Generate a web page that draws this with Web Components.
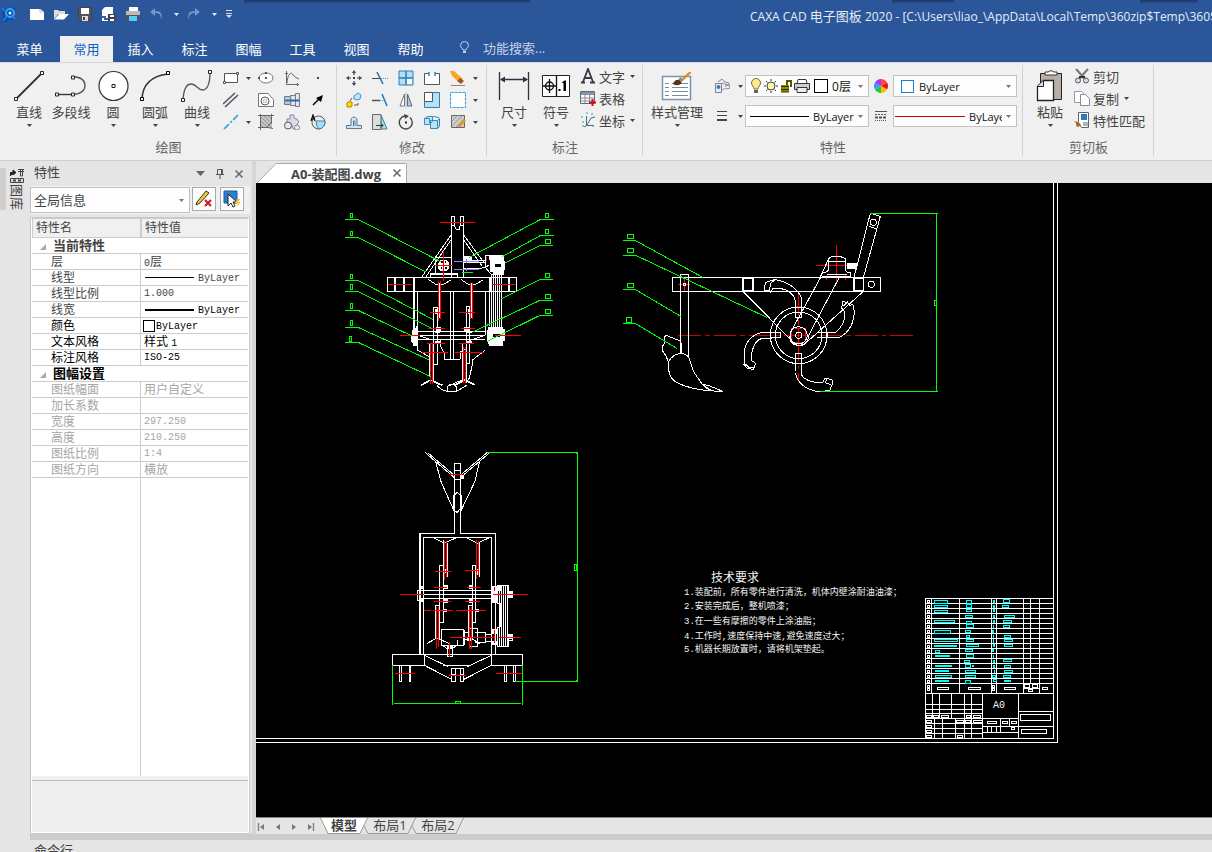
<!DOCTYPE html>
<html lang="zh-CN">
<head>
<meta charset="utf-8">
<title>CAXA CAD 电子图板 2020</title>
<style>
html,body{margin:0;height:100%}
body{font-family:"Open Sans","Noto Sans CJK SC",sans-serif;font-size:13px;color:#444;background:#e5e5e5;overflow:hidden}
cad-app{height:100vh}
</style>
</head>
<body>
<cad-app></cad-app>
<script>
const ICONS = {
logo:[16,16,'<path d="M1 2l5 1 5-2 4 2-2 3 1 5-3 1 2 3-5-2-3 3-4 1 1-5z" fill="#0a4bb0"/><circle cx="9" cy="7" r="4" fill="none" stroke="#3aa4f0" stroke-width="2"/><path d="M1 2l4 4M6 10l-4 5M12 10l2 3" stroke="#1a7ae8" stroke-width="2"/><circle cx="9" cy="7" r="1.500" fill="#dff"/>'],
file:[16,16,'<path d="M1 3h10l4 3v8H1z" fill="#fff"/><path d="M11 3v3h4" fill="none" stroke="#b8c4d8"/>'],
open:[16,16,'<path d="M1 13V4h4l1 1h6v3H5z" fill="#ddd"/><path d="M1 13.500L6 8h10l-5 5.500z" fill="#fff"/>'],
save:[16,16,'<path d="M1.500 1.500h13v13H3l-1.500-2z" fill="#555" stroke="#444"/><path d="M4 2h8v6H4z" fill="#fff"/><path d="M5 10h6v5H5z" fill="#ddd"/><path d="M6 11h2v3H6z" fill="#444"/>'],
saveas:[16,16,'<path d="M4 1h8v14H1V4z" fill="#fff"/><path d="M1 11h3v2h3" stroke="#36a" fill="none" stroke-width="2"/><path d="M7 8h8v7H7z" fill="#444"/><path d="M9 9h4v2H9zM9 13h4v2H9z" fill="#fff"/>'],
print:[16,16,'<path d="M4 1h9v4H4z" fill="#fff"/><path d="M1 5h14v7H1z" fill="#bbb"/><path d="M1 9h14v4H1z" fill="#555"/><path d="M4 10h8v5H4z" fill="#5cf"/>'],
undo:[14,14,'<path d="M6 1L1 5l5 4V6c5 0 6 2 6 7 2-6 0-9-6-9z" fill="#7795c6"/>'],
redo:[14,14,'<path d="M8 1l5 4-5 4V6c-5 0-6 2-6 7-2-6 0-9 6-9z" fill="#7795c6"/>'],
more:[8,10,'<path d="M1 1.500h6M1 4.500h6" stroke="#ddd"/><path d="M1 6h6L4 9z" fill="#ddd"/>'],
bulb:[12,14,'<path d="M4 9C4 7 1.500 7 1.500 4.500a4 4 0 0 1 8 0C9.500 7 7 7 7 9z" fill="none" stroke="#c6d2e6"/><path d="M4 10h3v2H4z" fill="#c6d2e6"/>'],
line:[32,32,'<path d="M3 29L29 3" stroke="#333" stroke-width="1.800"/><path d="M1.500 27.500h3v3h-3zM27.500 1.500h3v3h-3z" fill="#fff" stroke="#222"/>'],
pline:[32,32,'<path d="M2 24.500h16q12-1 12-9t-12-9" fill="none" stroke="#555" stroke-width="1.300"/><path d="M2 24.500h16" stroke="#2b3a4a"/><path d="M.5 23h3v3h-3zM16.500 23h3v3h-3zM16.500 6h3v3h-3z" fill="#fff" stroke="#222"/>'],
circle:[32,32,'<circle cx="16.500" cy="16" r="14.500" fill="#fff" stroke="#333" stroke-width="1.200"/><path d="M15 14.500h3v3h-3z" fill="#fff" stroke="#222"/>'],
arc:[32,32,'<path d="M3 29Q4 7 29 4" fill="none" stroke="#333" stroke-width="1.500"/><path d="M1.500 27.500h3v3h-3zM27.500 1.500h3v3h-3z" fill="#fff" stroke="#000"/>'],
curve:[32,32,'<path d="M2 30q1-16 8-16c6 0 6 6 12 6q7-1 7-18" fill="none" stroke="#555" stroke-width="1.300"/><path d="M.5 28.500h3v3h-3zM27.500.5h3v3h-3z" fill="#fff" stroke="#222"/>'],
rect:[16,16,'<path d="M1.500 3.500h13v9h-13z" fill="#fff" stroke="#555"/><path d="M.5 11.500h2v2h-2zM13.500 2.500h2v2h-2z" fill="#fff" stroke="#555"/>'],
ellipse:[16,16,'<ellipse cx="8" cy="8" rx="7" ry="5" fill="#fff" stroke="#777"/><path d="M7 2h2v2H7zM7 7h2v2H7zM0 7h2v2H0z" fill="#555"/>'],
func:[16,16,'<path d="M2.500 1v13.500H15M1 3.500h3M13.500 13v3M3 13C4 2 8 2 9 5q3 3 6 4" fill="none" stroke="#666"/>'],
point:[16,16,'<path d="M7 7h2v2H7z" fill="#444"/>'],
parallel:[16,16,'<path d="M0 12L12 1M2 15L15 3" stroke="#556" stroke-width="1.600"/>'],
hole:[16,16,'<path d="M.5 14.500v-13H10l5.500 6v7z" fill="#fff" stroke="#777"/><circle cx="7" cy="9" r="4" fill="#fff" stroke="#556"/><path d="M5.500 7.500h3v3h-3z" fill="#eee" stroke="#999" stroke-width=".5"/>'],
shaft:[16,16,'<path d="M.5 4.500h6v8h-6zM6.500 3.500h5v10h-5zM11.500 1.500h4v13h-4z" fill="#dfe7f0" stroke="#778"/><path d="M1 8.500h14" stroke="#369" stroke-width="2"/><path d="M1 6h7M1 11h7" stroke="#8ab"/>'],
arrow:[16,16,'<path d="M3 13L9 7" stroke="#000" stroke-width="1.500"/><path d="M13 3l-2 7-5-4z" fill="#000"/>'],
centre:[16,16,'<path d="M1 15L15 1" stroke="#2da3e0" stroke-width="1.700" stroke-dasharray="7 2 2 2"/>'],
hatch:[16,16,'<path d="M2 2h12v12H2z" fill="#c4c4c4"/><path d="M2 6l8 8M2 2l12 12M6 2l8 8M2 10l4 4M10 2l4 4" stroke="#999"/><path d="M2.500 0v16M0 1.500h16M13.500 0v9q-4 2-4 4.500M0 13.500h10l5 1" fill="none" stroke="#666"/>'],
gear:[16,16,'<path d="M6 1h4v3l3 1 2 3-2 2v5h-4l-1-4-3-2H3V5h3z" fill="#d7dce8" stroke="#889"/><circle cx="4" cy="11.500" r="3.500" fill="#e8e8ee" stroke="#556"/><circle cx="13" cy="13.500" r="2.500" fill="#eee" stroke="#889"/>'],
text3d:[16,16,'<circle cx="8.500" cy="8.500" r="6.500" fill="#eee" stroke="#555"/><path d="M6 7h9q0 7-6 8-3-2-3-8z" fill="#a8dcf8" stroke="#38a"/><path d="M1 7l2-6 2 6M1.500 5h3" fill="none" stroke="#000" stroke-width="1.200"/>'],
move:[16,16,'<path d="M8 1v4M8 11v4M1 8h4M11 8h4M6.500 3L8 1l1.500 2M6.500 13L8 15l1.500-2M3 6.500L1 8l2 1.500M13 6.500L15 8l-2 1.500" fill="none" stroke="#445" stroke-width="1.200"/><path d="M7 7h2v2H7z" fill="#333"/>'],
trim:[16,16,'<path d="M0 8.500h9" stroke="#444"/><path d="M9 8.500h7" stroke="#3ac" stroke-dasharray="1 1"/><path d="M5 2l6 12" stroke="#2574b8" stroke-width="1.600"/>'],
array:[16,16,'<path d="M1 1h14v14H1z" fill="#b4dcf4" stroke="#2a7fb5"/><path d="M1 8h14M8 1v14" stroke="#2a7fb5" stroke-width="1.500"/><path d="M9 9h5v5H9z" fill="#fff"/>'],
breakp:[16,16,'<path d="M5 3.500H.5v11h15v-11H11" fill="#fff" stroke="#555"/><path d="M5 2v4M11 2v4" stroke="#1e8ad6" stroke-width="1.500"/>'],
erase:[16,16,'<path d="M0 1h4l9 8-3 4L2 6z" fill="#f8a820"/><path d="M10 8l4 3-3 3-4-3z" fill="#a0522d"/><path d="M1 15.500h14" stroke="#888"/>'],
copy2:[16,16,'<path d="M8 4l4-3 3 2-1 4-3 1-3-1z" fill="#b8e4fc" stroke="#3a9ad0"/><path d="M1 11l1-1h4v4l-1 1H1z" fill="#fd0" stroke="#a80"/><path d="M8 13h4v-2M6 6L4 9" stroke="#a33" fill="none"/>'],
extend:[16,16,'<path d="M0 8.500h8" stroke="#555" stroke-width="1.500"/><path d="M8 8.500h4" stroke="#2a9" stroke-dasharray="1 1"/><path d="M10 2l5 12" stroke="#2574b8" stroke-width="1.500"/>'],
mirror:[16,16,'<path d="M6.500 2v12H2z" fill="#fff" stroke="#777"/><path d="M9.500 2v12H14z" fill="#9fd0ee" stroke="#667"/><path d="M8 0v16" stroke="#bbb"/>'],
scale:[16,16,'<path d="M.5.5h15v15H.5z" fill="#b4e0f8" stroke="#3a7da8"/><path d="M.5.5h8v9h-8z" fill="#fff" stroke="#555"/>'],
stretch:[16,16,'<path d="M.5.500h15v15H.5z" fill="#fff" stroke="#2a9be0" stroke-dasharray="3 1"/>'],
offset:[16,16,'<path d="M1 11.500h4V5q3-4 6 0v6.500h4.500v3H.5v-3z" fill="#c9e6f7" stroke="#678"/><path d="M7.500 12V7h1.500v5" stroke="#678" fill="#f0f0f0"/>'],
skew:[16,16,'<path d="M9 1l6 14H9z" fill="#a8dcf4" stroke="#389"/><path d="M.5.5H9v15H.5z" fill="#ddd" stroke="#667"/><path d="M4 11.500h7M9 9.500l2 2-2 2" stroke="#333" fill="none"/>'],
rotate:[16,16,'<path d="M7 2a6.500 6.500 0 1 0 5 1.500" fill="none" stroke="#444" stroke-width="1.400"/><path d="M6 0l5 2-4 3z" fill="#444"/><path d="M7 7.500h2v2H7z" fill="#222"/>'],
block:[16,16,'<path d="M.5 4.500l3-2h5v5l-3 3h-5zM6.500 6.500h7l2-2v8l-2 2h-7zM.5 4.500h5v5M13.500 6.500v8M9 2.500l6 1" fill="#b8e4fa" stroke="#3a8bb5"/>'],
hatchedit:[16,16,'<path d="M1.500 1.500h13v12h-13z" fill="#ccc" stroke="#666"/><path d="M2 7l6-6M2 12L12 2M6 13l8-8" stroke="#999"/><path d="M14 5l2 2-6 6H8v-2z" fill="#e8962a"/>'],
dim:[32,32,'<path d="M1.500 2v28M30.500 2v28M3 9.500h26" stroke="#2b3240" stroke-width="1.300"/><path d="M2 9.500l5-3v6zM30 9.500l-5-3v6z" fill="#2b3240"/>'],
symbol:[32,32,'<path d="M2.500 5.500h27v21h-27z" fill="#fff" stroke="#222"/><path d="M16.500 5v22M3 16h13M9.500 9v14" stroke="#111" stroke-width="1.300"/><circle cx="9.500" cy="16" r="4" fill="none" stroke="#111" stroke-width="1.400"/><path d="M18.500 19h2v2h-2zM21.500 13l3-2.500h1.500V21h-2.500v-8z" fill="#000"/>'],
letter:[16,16,'<path d="M1 14.500h4M10 14.500h5M3 14L8 1l5 13M5 10h6" stroke="#333a44" fill="none" stroke-width="1.800"/>'],
table:[16,16,'<path d="M.5 1.500h14v12H.5z" fill="#fff" stroke="#667"/><path d="M1 2h13v3H1z" fill="#8694a8"/><path d="M1 8h13M1 11h13M5 5v8M9.500 5v8" stroke="#889"/><path d="M12.500 9v7M9 12.500h7" stroke="#c11" stroke-width="2"/>'],
coord:[16,16,'<path d="M6.500 4v9.500H14M7 13l4-7 4-1M4 15l3-2" fill="none" stroke="#567"/><path d="M1 5h3M2 10h2M2 14h2M6 1h3M11 2h3M12 14h3" stroke="#29c" stroke-dasharray="2 1"/>'],
styles:[32,32,'<path d="M1.500 6.500h28v23h-28z" fill="#fff" stroke="#7d93a8" stroke-width="1.500"/><path d="M4 13.500h4M11 13.500h16M4 17.500h4M11 17.500h16M4 21.500h4M11 21.500h16M4 25.500h4M11 25.500h16" stroke="#7a8ca0"/><path d="M21 8l7-6q3-1 2 1l-7 7z" fill="#e08a2a"/><path d="M19 7l4 3-3 2-3-1z" fill="#888"/><path d="M12 14q2-5 6-4l3 3q-4 4-9 1z" fill="#5a3418"/>'],
layers:[16,16,'<path d="M4 4l4-3 3 3 4 1v2l-4 1M5 7l4-2 7 3v2l-4 1" fill="#eee" stroke="#889"/><path d="M1.500 5.500h6v9h-6z" fill="#e8eef5" stroke="#789"/><circle cx="4.500" cy="9" r="2" fill="#47a"/><path d="M8 12l4-2" stroke="#999"/>'],
lweight:[12,12,'<path d="M1 1.500h10M1 5.500h10" stroke="#445"/><path d="M1 10h10" stroke="#445" stroke-width="2"/>'],
lightbulb:[12,16,'<path d="M4 11C4 8 1.500 8 1.500 5a4.500 4.500 0 0 1 9 0C10.500 8 8 8 8 11z" fill="#fce98a" stroke="#765"/><path d="M4 12h4v3H4z" fill="#666"/>'],
sun:[16,16,'<circle cx="8" cy="8" r="4" fill="#fff6b0" stroke="#444"/><path d="M8 1v2M8 13v2M1 8h2M13 8h2M3 3l1.500 1.500M11.500 11.500L13 13M13 3l-1.500 1.500M4.500 11.500L3 13" stroke="#333"/>'],
unlock:[13,14,'<path d="M1 6h8v7H1z" fill="#8c8c00"/><path d="M1 7.500h8M1 10.500h8M1 13h8" stroke="#333300"/><path d="M7 6V2h4v6" fill="none" stroke="#555500" stroke-width="2"/>'],
printer:[16,16,'<path d="M4 1.500h8l1 4H3z" fill="#fff" stroke="#333"/><path d="M.5 5.500h15v6H.5z" fill="#ccd" stroke="#333"/><path d="M3 9.500h10v5H3z" fill="#eee" stroke="#333"/>'],
wheel:[14,14,'<path d="M7 7L7 0A7 7 0 0 1 13 3.500z" fill="#f44"/><path d="M7 7l6-3.500a7 7 0 0 1 0 7z" fill="#e11"/><path d="M7 7l6 3.500A7 7 0 0 1 7 14z" fill="#fb0"/><path d="M7 7v7a7 7 0 0 1-6-3.500z" fill="#2c3"/><path d="M7 7l-6 3.500a7 7 0 0 1 0-7z" fill="#39f"/><path d="M7 7L1 3.500A7 7 0 0 1 7 0z" fill="#a3e"/>'],
ltype:[12,12,'<path d="M0 1.500h12" stroke="#555"/><path d="M0 4.500h12" stroke="#555" stroke-dasharray="2 1"/><path d="M0 7.500h12" stroke="#555" stroke-width="2" stroke-dasharray="3 1"/><path d="M0 10.500h12" stroke="#555" stroke-dasharray="1 1"/>'],
paste:[28,32,'<path d="M4.500 3.500h21v26h-21z" fill="#b9afa4" stroke="#222"/><path d="M9 5V2h3q3-3 6 0h3v3z" fill="#fff" stroke="#333"/><path d="M1.500 16.500l6-6h10v20h-16z" fill="#fff" stroke="#222" stroke-width="1.300"/><path d="M1.500 16.500h6v-6" fill="#dde" stroke="#222"/>'],
cut:[16,16,'<path d="M2 1l9 10M14 1L5 11" stroke="#777" stroke-width="2"/><path d="M5 9h6" stroke="#333" stroke-width="2"/><circle cx="4" cy="12.500" r="2.500" fill="#ddd" stroke="#556"/><circle cx="12" cy="12.500" r="2.500" fill="#ddd" stroke="#556"/>'],
copy:[16,16,'<path d="M.5 1.500h7l2 2v9h-9z" fill="#fff" stroke="#99a"/><path d="M6.500 4.500h5l4 4v7h-9z" fill="#fff" stroke="#889"/>'],
match:[16,16,'<path d="M4.500.5h10v15h-7l-3-5z" fill="#fff" stroke="#567"/><path d="M7 2h6v6H7z" fill="#3978b8"/><path d="M9 11h5M9 13h5" stroke="#567"/><path d="M0 9l4 1 3 3-3 2q-2 0-2-4z" fill="#b0651e"/>'],
editx:[20,20,'<path d="M3 13L12 2l3 2-9 10-4 2z" fill="#f6c830" stroke="#333"/><path d="M11 11l6 6M17 11l-6 6" stroke="#c22" stroke-width="2.200"/>'],
pick:[20,20,'<path d="M2 2h13v12H2z" fill="#2d7fd0" stroke="#1a5a9a"/><path d="M6 5v12l3-3 2 4 2-1-2-4h4z" fill="#fff" stroke="#222"/><path d="M15 10l-2 4h3l-2 4 5-5h-3l2-3z" fill="#fb2"/>'],
pin:[10,12,'<path d="M2.500 1.500h5v5h-5zM1 6.500h8M5 7v4M6.500 2v4" fill="none" stroke="#555"/>'],
close:[10,10,'<path d="M1.500 1.500l7 7M8.500 1.500l-7 7" stroke="#666" stroke-width="1.500"/>'],
drop:[10,6,'<path d="M0 0h9L4.500 5z" fill="#666"/>'],
lib:[16,16,'<path d="M1.500 8V4.500H6M4 2l3 2.500L4 7z" fill="#222" stroke="#222"/><path d="M9 1.500h6M9 3.500h6M11.500 2v6h2V2" fill="none" stroke="#444"/><path d="M1.500 10.500h13v4h-13z" fill="#ddd" stroke="#444"/><path d="M4 12.500h3M9 12.500h3" stroke="#444" stroke-width="2"/>'],
first:[10,10,'<path d="M1.500 1v8" stroke="#777" stroke-width="1.300"/><path d="M7 2v6L3 5z" fill="#777"/>'],
prev:[10,10,'<path d="M7 2v6L3 5z" fill="#777"/>'],
next:[10,10,'<path d="M3 2v6l4-3z" fill="#777"/>'],
last:[10,10,'<path d="M8.500 1v8" stroke="#777" stroke-width="1.300"/><path d="M3 2v6l4-3z" fill="#777"/>'],
caret:[5,3,'<path d="M0 0h5L2.500 3z" fill="currentColor"/>'],
fold:[6,6,'<path d="M0 6h6V0z" fill="#aaa"/>']
};

function define(name, html, setup){
  const t = document.createElement('template');
  t.innerHTML = html;
  customElements.define(name, class extends HTMLElement{
    constructor(){ super(); this.attachShadow({mode:'open'}).append(t.content.cloneNode(true)); }
    connectedCallback(){ if(setup) setup(this, this.shadowRoot); }
  });
}
const reset = 'button{font:inherit;color:inherit;background:none;border:0;padding:0;margin:0}';

define('cad-icon','<style>:host{display:inline-flex;flex:none}svg{display:block}</style>',(h,r)=>{
  const [w,ht,m]=ICONS[h.getAttribute('name')];
  r.innerHTML='<style>:host{display:inline-flex;flex:none}svg{display:block}</style><svg aria-hidden="true" width="'+w+'" height="'+ht+'" viewBox="0 0 '+w+' '+ht+'">'+m+'</svg>';
});

define('icon-button',`<style>${reset}:host{display:flex}button{display:flex;align-items:center;justify-content:center;flex:1}</style><button type="button"><slot></slot></button>`,
  (h,r)=>r.querySelector('button').setAttribute('aria-label',h.getAttribute('tip')||''));

define('big-button',`<style>${reset}:host{display:block;min-width:42px}
button{display:flex;flex-direction:column;align-items:center;width:100%;padding-top:7px;white-space:nowrap}
.l{line-height:20px;height:22px}</style>
<button type="button"><slot name="icon"></slot><span class="l"><slot></slot></span><slot name="caret"></slot></button>`);

define('text-button',`<style>${reset}:host{display:block}button{display:flex;align-items:center;height:22px;white-space:nowrap;gap:3px}
::slotted(cad-icon[name=caret]){margin-left:2px}</style><button type="button"><slot></slot></button>`);

define('ribbon-group',`<style>:host{display:flex;flex-direction:column;position:relative}
:host::after{content:"";position:absolute;right:0;top:2px;bottom:4px;width:1px;background:#d2d2d2}
.b{display:flex;height:74px;align-items:flex-start;padding:var(--pad)}.n{text-align:center;color:#666;line-height:20px}</style>
<div class="b"><slot></slot></div><div class="n"></div>`,(h,r)=>r.querySelector('.n').textContent=h.getAttribute('name'));

define('tool-grid',`<style>:host{display:grid;padding-top:4px;grid-auto-rows:22px;align-items:center;justify-items:center}</style><slot></slot>`);

define('cad-combo',`<style>:host{display:block;position:relative;height:20px;border:1px solid #c3c3c3;background:#fdfdfd;color:#111}
select{appearance:none;width:100%;height:100%;border:0;margin:0;background:none;font:inherit;color:inherit;padding:0 14px 0 var(--indent,4px);box-sizing:border-box;display:block}
.d{position:absolute;inset:0 16px 0 4px;display:flex;align-items:center;gap:1px;pointer-events:none}
.c{position:absolute;right:5px;top:50%;margin-top:-1px;color:#777;display:flex;pointer-events:none}</style>
<select><option></option></select><div class="d"><slot></slot></div><span class="c"><cad-icon name="caret"></cad-icon></span>`,(h,r)=>{
  r.querySelector('select').setAttribute('aria-label',h.getAttribute('tip'));
  r.querySelector('option').textContent=h.getAttribute('value');
});

define('title-bar',`<style>:host{display:flex;align-items:center;height:28px;position:relative;color:#e6ecf5;font-size:12px;
background:linear-gradient(#1b3766,#2b579a00) 244px 0/286px 4px no-repeat,linear-gradient(#1b3766,#2b579a00) 892px 0/62px 4px no-repeat,linear-gradient(#1b3766,#2b579a00) 1140px 0/58px 4px no-repeat}
nav{display:flex;align-items:center;padding-left:1px;gap:8px;flex:none}
nav icon-button:nth-child(1){margin-right:4px}
.t{position:absolute;left:750px;right:0;top:6px;line-height:20px;white-space:nowrap;overflow:hidden}
.g{display:flex;gap:7px}</style>
<nav><icon-button tip="应用"><cad-icon name="logo"></cad-icon></icon-button><icon-button tip="新建"><cad-icon name="file"></cad-icon></icon-button>
<icon-button tip="打开"><cad-icon name="open"></cad-icon></icon-button><icon-button tip="保存"><cad-icon name="save"></cad-icon></icon-button><icon-button tip="另存为"><cad-icon name="saveas"></cad-icon></icon-button>
<icon-button tip="打印"><cad-icon name="print"></cad-icon></icon-button><span class="g"><icon-button tip="撤销"><cad-icon name="undo"></cad-icon></icon-button><icon-button tip="撤销列表"><cad-icon name="caret"></cad-icon></icon-button></span>
<span class="g"><icon-button tip="恢复"><cad-icon name="redo"></cad-icon></icon-button><icon-button tip="恢复列表"><cad-icon name="caret"></cad-icon></icon-button></span><icon-button tip="自定义"><cad-icon name="more"></cad-icon></icon-button></nav>
<div class="t"><slot></slot></div>`);

define('menu-tabs',`<style>${reset}:host{display:flex;height:26px;padding-top:8px;color:#fff}
button{width:53px;margin-right:1px;height:26px;padding-bottom:2px}button:first-of-type{width:59px}
.on{background:#f0f0f0;color:#1060c8}
label{display:flex;align-items:center;gap:12px;margin-left:21px;height:24px}
input{width:120px;border:0;padding:0;background:none;color:inherit;font:inherit;outline:0}
input::placeholder{color:#c6d2e6}</style>
<button>菜单</button><button class="on">常用</button><button>插入</button><button>标注</button><button>图幅</button><button>工具</button><button>视图</button><button>帮助</button>
<label><cad-icon name="bulb"></cad-icon><input type="text" aria-label="功能搜索" placeholder="功能搜索..."></label>`);

const I=(n,tip)=>`<icon-button tip="${tip||n}"><cad-icon name="${n}"></cad-icon></icon-button>`;
const C='<cad-icon slot="caret" name="caret"></cad-icon>';
const B=(n,t,c=C)=>`<big-button><cad-icon slot="icon" name="${n}"></cad-icon>${t}${c}</big-button>`;
define('cad-ribbon',`<style>:host{display:flex;height:97px;background:#f0f0f0;border-top:1px solid #ddd5de;border-bottom:1px solid #cfcfcf;box-sizing:content-box}
.g1{--pad:0 6px 0 8px}.g2{--pad:0 7px 0 4px}.g3{--pad:0 8px 0 6px}.g4{--pad:0 6px 0 8px}.g5{--pad:0 9px 0 6px}
.a{grid-template-columns:26px 9px 26px 26px 26px}.m{grid-template-columns:repeat(5,26px) 9px}
.list{padding:2px 0 0 3px}
.p{display:grid;grid-template-columns:28px 9px 124px 24px 124px;grid-auto-rows:30px;align-items:center;justify-items:center;padding:8px 0 0 5px;font-size:11px}
cad-combo{width:122px}.sw{width:12px;height:12px;border:1px solid #000;background:#fff}.bl{border-color:#1a7fd8;width:11px;height:11px;margin-left:3px}
.k{width:59px;height:1px;background:#000}.r{width:70px;height:1px;background:#c00;margin-left:-3px}
.lay{font-size:12px}.ls{margin-left:3px}</style>
<ribbon-group class="g1" name="绘图">${B('line','直线')}${B('pline','多段线','')}${B('circle','圆')}${B('arc','圆弧')}${B('curve','曲线')}
<tool-grid class="a">${I('rect')}${I('caret')}${I('ellipse')}${I('func')}${I('point')}${I('parallel')}<span></span>${I('hole')}${I('shaft')}${I('arrow')}${I('centre')}${I('caret')}${I('hatch')}${I('gear')}${I('text3d')}</tool-grid></ribbon-group>
<ribbon-group class="g2" name="修改"><tool-grid class="m">${['move','trim','array','breakp','erase','caret','copy2','extend','mirror','scale','stretch','caret','offset','skew','rotate','block','hatchedit','caret'].map(n=>I(n)).join('')}</tool-grid></ribbon-group>
<ribbon-group class="g3" name="标注">${B('dim','尺寸')}${B('symbol','符号')}<div class="list"><text-button><cad-icon name="letter"></cad-icon>文字<cad-icon name="caret"></cad-icon></text-button><text-button><cad-icon name="table"></cad-icon>表格</text-button><text-button><cad-icon name="coord"></cad-icon>坐标<cad-icon name="caret"></cad-icon></text-button></div></ribbon-group>
<ribbon-group class="g4" name="特性">${B('styles','样式管理')}<div class="p">
${I('layers')}${I('caret')}<cad-combo class="lay" tip="图层" value="0层" style="--indent:86px"><cad-icon name="lightbulb"></cad-icon><cad-icon name="sun"></cad-icon><cad-icon name="unlock"></cad-icon><cad-icon name="printer"></cad-icon><span class="sw ls"></span></cad-combo>${I('wheel')}<cad-combo tip="颜色" value="ByLayer" style="--indent:25px"><span class="sw bl"></span></cad-combo>
${I('lweight')}${I('caret')}<cad-combo tip="线型" value="ByLayer" style="--indent:67px"><span class="k"></span></cad-combo>${I('ltype')}<cad-combo tip="线宽" value="ByLayer" style="--indent:75px"><span class="r"></span></cad-combo></div></ribbon-group>
<ribbon-group class="g5" name="剪切板">${B('paste','粘贴')}<div class="list"><text-button><cad-icon name="cut"></cad-icon>剪切</text-button><text-button><cad-icon name="copy"></cad-icon>复制<cad-icon name="caret"></cad-icon></text-button><text-button><cad-icon name="match"></cad-icon>特性匹配</text-button></div></ribbon-group>`);

define('property-panel',`<style>${reset}:host{display:flex;flex-direction:column;width:220px;flex:none}
header{display:flex;align-items:center;height:25px;padding:0 6px 0 4px;line-height:22px}header b{font-weight:400;flex:1;height:25px}
header icon-button{margin-left:9px}
.bar{display:flex;gap:2px;background:#f0f0f0;height:28px;padding:1px 4px 0 0;box-sizing:border-box;align-items:flex-start}
.bar cad-combo{flex:1;height:24px;color:#444;--indent:3px}
.bar icon-button{width:22px;height:22px;border:1px solid #aaa;background:#fdfdfd;margin-right:2px}
.box{flex:1;display:flex;flex-direction:column;border:1px solid #c8c8c8;margin:3px 0 0;padding:0 1px 1px;background:#fff;min-height:0}
table{border-collapse:separate;border-spacing:0;width:100%;font-size:12px;table-layout:fixed}
th,td{padding:0;text-align:left;font-weight:400;height:15px;line-height:15px;border-bottom:1px solid #ccc;white-space:nowrap}
thead th{background:#f0f0f0;height:18px;line-height:18px;border:1px solid #ccc;border-right:0;padding-left:3px}
thead th:last-child{border-left-width:2px}
tbody th{padding-left:19px}td{border-left:1px solid #ccc;padding-left:3px}
tbody th[colspan]{font-weight:700;font-size:13px;padding-left:8px}tbody th cad-icon{margin-right:7px}
.k{color:#000}.d{color:#a6a6a6}
td.m{font:10px/15px "Liberation Mono",monospace}td span.m{font:10px/10px "Liberation Mono",monospace}td.ln{padding-left:4px}
i{display:inline-block;width:49px;height:1px;background:#000;vertical-align:middle;margin-right:4px}i.w{height:2px}
.s{display:inline-block;width:10px;height:10px;border:1px solid #000;vertical-align:middle;margin:0 1px 0 -1px}
.sr{line-height:12px}
.rest{flex:1;display:flex}.rest span{width:108px;border-right:1px solid #ccc}
.help{height:52px;background:#eee;border-top:4px solid #f0f0f0;box-shadow:inset 0 1px #c0c0c0}</style>
<header><b>特性</b>${I('drop','菜单')}${I('pin','固定')}${I('close','关闭')}</header>
<div class="bar"><cad-combo tip="对象" value="全局信息"></cad-combo>${I('editx','清除')}${I('pick','拾取')}</div>
<div class="box"><table><colgroup><col style="width:108px"><col></colgroup><thead><tr><th>特性名</th><th>特性值</th></tr></thead><tbody>
<tr><th colspan="2"><cad-icon name="fold"></cad-icon>当前特性</th></tr>
<tr><th>层</th><td><span class="m">0</span>层</td></tr>
<tr><th>线型</th><td class="ln sr"><i></i><span class="m">ByLayer</span></td></tr>
<tr><th>线型比例</th><td class="m">1.000</td></tr>
<tr><th>线宽</th><td class="ln k sr"><i class="w"></i><span class="m">ByLayer</span></td></tr>
<tr class="k"><th>颜色</th><td class="sr"><span class="s"></span><span class="m">ByLayer</span></td></tr>
<tr class="k"><th>文本风格</th><td>样式 <span class="m">1</span></td></tr>
<tr class="k"><th>标注风格</th><td class="m">ISO-25</td></tr>
<tr class="k"><th colspan="2"><cad-icon name="fold"></cad-icon>图幅设置</th></tr>
<tr class="d"><th>图纸幅面</th><td>用户自定义</td></tr>
<tr class="d"><th>加长系数</th><td></td></tr>
<tr class="d"><th>宽度</th><td class="m">297.250</td></tr>
<tr class="d"><th>高度</th><td class="m">210.250</td></tr>
<tr class="d"><th>图纸比例</th><td class="m">1:4</td></tr>
<tr class="d"><th>图纸方向</th><td>横放</td></tr></tbody></table><div class="rest"><span></span></div><div class="help"></div></div>`);

define('side-dock',`<style>:host{display:block;width:30px;flex:none;position:relative}
:host::before{content:"";position:absolute;left:0;top:7px;width:6px;height:42px;background:#cfcfcf}
a{display:flex;flex-direction:column;align-items:center;margin:7px 5px 0 9px;color:#444;text-decoration:none;font-size:13px;line-height:16px}
span{writing-mode:vertical-rl;text-orientation:sideways}</style>
<a href="#lib"><cad-icon name="lib"></cad-icon><span>图库</span></a>`);

/* parts-list marks: x, y, width, height */
const cy=[[793,121,40,8],[793,136,40,7],[793,151,40,7],[793,181,61,7],[793,211,49,8],[793,238,70,7],[796,271,13,7],[796,346,49,7],
[889,121,16,8],[889,133,16,10],[889,148,16,7],[886,166,22,7],[889,183,16,8],[889,193,22,10],[886,211,16,7],[889,226,10,7],[889,238,22,7],[889,253,37,7],[886,268,22,7],[889,283,22,10],[883,301,16,7],[886,313,16,10],[886,331,31,7],[886,346,31,7],[886,361,16,9],
[1000,118,19,10],[997,136,19,7],[1003,166,31,7],[1000,181,25,7],[1000,196,19,7],[1003,226,19,7],[1003,238,25,7],[1003,253,25,7],[1000,298,25,7],[1003,316,19,7],[1003,331,25,7],[1000,346,22,7],[967,346,10,7],[970,358,10,7]];
const cyf=[[793,255,68,6],[795,285,45,6],[795,315,51,6],[795,330,42,6],[795,360,42,6],[906,315,6,6],[1002,360,21,6],[969,120,6,9],[969,136,6,8],[969,148,6,8],[969,165,6,8],[969,180,6,8],[969,195,3,8],[966,210,6,8],[969,225,3,8],[969,236,3,12],[969,251,6,9],[966,267,6,9],[969,285,3,8],[969,300,6,9],[969,315,6,9],[972,330,3,8]];
const wb=[[802,381,34,7],[895,381,37,7],[1003,381,34,7],[1117,381,16,7],[1063,374,14,8],[1087,374,16,7],[1075,388,13,7],[772,376,7,6],[772,386,7,6],[967,376,7,6],[967,386,7,6],[769,465,15,7],[790,465,16,7],[814,465,22,7],[889,465,13,7],[910,465,22,7],[769,481,15,7],[859,481,22,7],[886,481,16,7],[910,481,26,7],[769,496,15,7],[769,511,15,7],[769,526,15,7],[862,526,16,7],[952,484,28,7],[997,484,16,7],[1024,484,16,7],[1024,503,10,6],[1051,463,91,19],[1054,508,76,13]];
const rects=a=>a.map(([x,y,w,h])=>'M'+x+' '+y+'h'+w+'v'+h+'h-'+w+'z').join('');
let rows='',nums='';
for(let y=116;y<=371;y+=15) rows+='M766 '+y+'H1150';
for(let y=121;y<370;y+=15) nums+='M773 '+y+'h5v7h-5z';

define('drawing-view',`<style>:host{display:block;flex:1;background:#000;min-height:0;overflow:hidden}
svg{display:block}:host>svg{width:100%;height:100%;overflow:hidden}
path,circle,rect{fill:none;stroke:#fff;stroke-width:3}.x{shape-rendering:crispEdges}
.g path{stroke:#0f0}.r path{stroke:#f00}path.h{stroke-width:5}path.v{stroke:#88f}path.c{stroke:#0ff}path.cf{fill:#0ff;stroke:none}path.f{fill:#fff;stroke:none}path.bk{fill:#000;stroke:none}
text{fill:#f4f4f4;font:9px "Liberation Mono","Noto Sans CJK SC",monospace}text.t{font-size:12px}text.o{font:10px "Liberation Mono",monospace}
path.s{stroke-width:1}</style>
<svg role="img" aria-label="装配图" width="100%" height="100%">
<g class="x"><path class="s" d="M797.500 0V555.500H0M801.500 0V559.500H0"/></g>
<svg class="x" x="84" y="17" width="220" height="200" viewBox="0 0 660 600">
<path d="M334 232V49h10v30l4 8h10l2-8V49h11v183M334 76h10M360 76h10M334 104L246 230M334 118L258 230M370 104l64 86M370 118l56 80M142 233h388v41H142zM220 274v164M232 274v176M448 274v104M436 274v130M331 274v204M340 274v204M232 395h204M232 406h204M232 418h204M286 222v-50h48M272 232v-12h80v12M265 238l24 16h20l24-14M362 238l24 16h20l22-14M281 492V322h12v170zM378 490V320h10v170zM270 337h38M368 337h38M232 450l36 20M436 450l-36 28M232 405l40 14M436 405l-45 16M302 420v20l10 18v20h48l2-22 12-8M268 430v100M280 430v110M366 430v106M380 430v120M290 556l14 12 16 6h30l30-18M322 574v-14l8-6h14l6 8v12M330 556l40-18M396 478v20l-8 36-6 10M370 180h66M370 188h66M370 206h50l28-10M434 200l20 24M436 166h54v56h-38M436 166v34"/>
<path class="h" d="M164 234v40M192 234v40M506 234v40M484 234v40M221 234v150M449 234v40M298 250v105M394 250v105M270 222h82M243 556l28-16 36 16M342 556l32-16 30 14M285 395h16M285 425h16M380 395h16M380 425h16"/>
<path d="M454 224v160M460 224v160M466 224v160M472 224v160M478 224v160M484 224v160M216 392h14v34h-14zM230 378v60"/>
<path class="f" d="M448 168h40v14h8v28h-6v14h-32v-8h-8zM444 380h44v8h8v34h-8v16h-40l-6-14v-30zM218 384h14v54h-14v-12h-6v-22h6zM302 180h18l8 10v14l-8 10h-18l-8-10v-14zM286 328h14v14h-14zM384 328h14v14h-14zM288 380h14v14h-14zM372 380h18v14h-18zM368 168h28v12h-28z"/>
<path class="bk" d="M464 192h18v10h-18zM458 402h22v10h-22zM302 184h6v6h-6zM314 200h6v6h-6zM314 184h4v6h-4zM302 202h4v4h-4z"/>
<path class="v" d="M342 183h76M342 208h76M380 178v10M380 204v10"/>
<g class="r"><path d="M300 67h105M143 253h70M456 253h70M310 153v90M284 196h56M295 244v118M301 244v112M392 250v108M398 250v108M271 430v122M277 430v122M370 440v110M376 440v110M270 337h44M358 337h48M264 385h52M362 385h44M260 430h54M356 430h46M245 457h80M346 457h86M180 406h60M466 406h78M440 170v14"/></g>
<g class="g"><path d="M15 58h39l250 128M15 112h39l204 104M15 241h39l226 118M15 274h39l222 112M15 331h39l162 77M15 382h39l214 98M15 427h39l218 103M641 58h-39L388 172M641 106h-39l-116 64M638 136h-38l-106 54M638 238h-38l-116 58M638 301h-38L400 395M638 346h-38l-158 78M366 217h32M31 39h7v14h-7zM31 94h7v13h-7zM31 222h7v14h-7zM31 253h7v16h-7zM31 310h7v16h-7zM31 361h7v15h-7zM27 408h8v15h-8zM616 40h10v12h-10zM616 88h10v12h-10zM616 118h16v12h-16zM616 220h12v12h-12zM616 283h16v12h-16zM616 328h16v12h-16z"/></g></svg>
<svg class="x" x="354" y="17" width="340" height="200" viewBox="0 0 1020 600">
<g class="r"><path style="stroke:#c00" stroke-dasharray="68 12 14 12" d="M205 406h713"/><path d="M566 274v72M566 360v14M566 384v100M566 498v10M566 520v26M679 135v110M618 196h94M649 226v14M706 226v14M205 253h36M222 238v34M556 318h18M545 385v34M586 385v34M556 385h20M556 426h20"/></g>
<path d="M187 233h624v41H187zM211 460V223h25v247M781 40l30 9-51 184M781 40l-49 192M776 78l24 9M400 275l140 142q26 36 52 8L758 276M632 232l-90 164q-10 40 24 40 28 0 30-30l94-178M655 178l-24 54M556 352v-50q-10-38-66-38l-10 14M574 352v-58q-16-42-80-56l-28 10-3 24h14l6-24 12-8M556 337h18v15h-18zM483 397h29v16h-29M483 397h-25q-52 10-56 66v30l10 12 18 3 7-18-12-8V460q8-42 36-46h24M400 493l10 2 6 6h16M620 398h33v14h-33M653 398h24q28-24 28-60l-10-14 4-20 12 4 18 6 4 20q-2 56-44 78h-34M700 318l12-12 8 10 10-4M556 514v-54h18v64q14 24 64 24l8-14 20 6v14l-6 16-28 6q-64-8-76-56M650 536l-4 12 16 6M636 228h86v-10h-8l-8-6v-36l-14-6h-28l-10 8v34l-8 6h-8l-6 10M655 184h50M652 222h58"/>
<path d="M211 423l-43-17-4 4v18l-7 12v12l10 14 8 19q14-22 36-25l12 2 13 8M175 483q-4 48 24 64 50 26 139 27l-38-16-22-5 12 13 20 7M236 470l14 44 26 38 28 20"/>
<path class="h" d="M399 235h29v37h-29zM731 235h29v37h-29zM213 430v30"/>
<circle cx="790" cy="67" r="9"/><circle cx="784" cy="253" r="9"/><circle cx="566" cy="406" r="85"/><circle cx="566" cy="406" r="70"/><circle cx="566" cy="406" r="26"/><circle cx="566" cy="406" r="9"/><circle cx="224" cy="254" r="4"/>
<path class="f" d="M712 190h28v16h-28z"/>
<g class="g"><path d="M781 40h203M979 40v534M630 574h354M973 301h7v15h-7zM39 121h36l203 111M39 166h38l393 186M39 268h36l137 81M39 370h36l125 75M52 103h19v13H52zM52 146h19v12H52zM52 250h19v12H52zM49 352h16v15H49z"/></g></svg>
<svg class="x" x="124" y="257" width="210" height="275" viewBox="0 0 630 825">
<path d="M118 643V280h105V70h18v210h105v363M131 643V292h203v351M223 92h18v26h-18M136 38l87 75M143 38l80 68M241 113l88-75M241 106l80-68M166 62l18 66 38 84M299 62l-14 62-42 88M220 212v-44l12-11 12 11v34l-12 15zM37 643h390v33h-93l-82 42M37 643v33h96l82 42M133 643v33M334 643v33M133 646l72 34M334 646l-72 34M190 676h84M215 684h36M58 676v48h7v-48M89 676v48h2v-48M373 676v48h7v-48M401 676v48h6v-48M215 684v40h12v-40M215 704h12M242 684v40h9v-40M242 704h9M131 451h203M131 463h203M131 475h203M178 376h12v171h-12zM277 376h9v171h-9zM163 294l30 16 34-16M262 294l30 16 34-16M190 300v110M202 310v100M289 310v100M298 310v100M166 496h12v100h-12zM265 496h12v100h-12zM184 568h66v48h-66zM250 577h18M286 577h30v30h-30M268 565h24v54h-24M316 583h18v20h-18M142 610l28-16 36 16M248 604l22-12 30 20M190 618l12 8v24h14v-24l12-8M352 436h33v38M352 436v54h8v72M385 455h12v18h-12M352 619h33v-38M352 619v-57h8M385 583h12v18h-12M364 436v183M370 436v183M376 436v183M382 436v183M358 436v183M112 450h18v30h-18z"/>
<path class="h" d="M120 282v360M232 600v16"/>
<path class="f" d="M118 438h14v10h-14zM118 474h14v12h-14zM336 438h14v50h-14zM336 568h16v14h-16zM336 602h16v12h-16zM190 388h14v12h-14zM288 388h12v16h-12zM190 435h14v12h-14zM266 435h14v12h-14zM190 478h14v12h-14zM266 478h14v12h-14zM352 436h12v16h-12zM388 456h10v14h-10zM388 584h10v14h-10zM250 570h4v44h-4zM190 506h10v10h-10zM286 506h10v10h-10zM240 106h12v10h-12zM260 590h14v12h-14zM200 618h20v8h-20z"/>
<g class="r"><path d="M210 103h42M60 463h72M338 463h106M131 511h22M160 511h60M228 511h90M210 592h136M356 592h67M165 394h48M255 391h42M162 442h40M262 442h40M162 484h52M254 484h46M194 304v115M200 304v106M290 300v118M296 304v100M169 500v128M175 500v122M268 500v126M274 500v126M208 606v46M45 700h60M348 700h79M207 706h51M344 440v14M344 570v40"/></g>
<g class="g"><path d="M322 37h270v687H406M588 40h6M588 720h6M37 676v118M427 676v118M42 790h380M226 784h16v6h-16zM583 373h7v18h-7z"/></g></svg>
<svg class="x" x="414" y="377" width="400" height="190" viewBox="0 0 1200 570">
<path d="${rows}${nums}M766 401h384M766 116v419M784 116v285M868 116v285M964 116v285M980 116v285M1060 116v285M1081 116v255M1108 116v285M1060 386h48M787 401v74M808 401v74M844 401v74M883 401v134M904 401v134M937 401v134M766 433h171M766 448h171M766 460h171M766 475h279M766 490h171M766 505h171M766 520h171M793 475v60M817 475v60M856 475v60M937 499h213M937 517h108M990 475v42M1018 475v24M952 499v18M964 499v18M978 499v18M1045 401v134M1045 454h105"/>
<path d="${rects(wb)}"/><path class="c" d="${rects(cy)}"/><path class="cf" d="${rects(cyf)}"/></svg>
<text class="t" x="455" y="399">技术要求</text>
<text x="428" y="412">1.装配前，所有零件进行清洗，机体内壁涂耐油油漆；</text>
<text x="428" y="426">2.安装完成后，整机喷漆；</text>
<text x="428" y="441">3.在一些有摩擦的零件上涂油脂；</text>
<text x="428" y="456">4.工作时,速度保持中速,避免速度过大；</text>
<text x="428" y="469">5.机器长期放置时，请将机架垫起。</text>
<text class="o" x="737" y="525">A0</text>
</svg>`);

define('doc-tab',`<style>${reset}:host{display:flex;height:22px;align-items:flex-end}
.t{position:relative;display:flex;align-items:center;height:20px;padding:0 5px 0 35px;font-weight:700;color:#444;gap:11px}
.t>svg{position:absolute;left:0;top:0;width:21px;height:20px}.e{position:absolute;left:20px;right:0;top:0;bottom:0;border:1px solid #aaa;border-left:0;border-bottom:0;border-radius:0 2px 0 0;background:#fff}
a,icon-button{position:relative}a{color:inherit;text-decoration:none;white-space:nowrap}</style>
<div class="t"><span class="e"></span><svg viewBox="0 0 21 20"><path d="M1 20L20 .5h1V20z" fill="#fff"/><path d="M1 20L20 .5h1" fill="none" stroke="#aaa"/></svg><a href="#doc"><slot></slot></a>${I('close','关闭图纸')}</div>`);

define('sheet-tabs',`<style>:host{display:flex;height:17px;border-top:1px solid #888;box-sizing:border-box;overflow:hidden}
nav{display:flex;align-items:center;gap:6px;padding:1px 5px 0 1px}
a{position:relative;width:48px;height:16px;line-height:14px;text-align:center;color:#444;text-decoration:none}
a:not(.on){width:44px;padding-right:4px}
a svg{position:absolute;left:0;top:0;overflow:visible;z-index:0}a span{position:relative}.on{font-weight:700}</style>
<nav>${I('first')}${I('prev')}${I('next')}${I('last')}</nav>
<a class="on" href="#m"><svg width="48" height="16"><path d="M0-1L8 15.500h32L48-1" fill="#fff" stroke="#999"/></svg><span>模型</span></a>
<a href="#a"><svg width="48" height="16"><path d="M-4 8L0 15.500h40L48-1" fill="none" stroke="#999"/></svg><span>布局1</span></a>
<a href="#b"><svg width="48" height="16"><path d="M-4 8L0 15.500h40L48-1" fill="none" stroke="#999"/></svg><span>布局2</span></a>`);

define('cad-app',`<style>:host{display:flex;flex-direction:column}
.top{background:#2b579a}.main{flex:1;display:flex;min-height:0}
.col{flex:1;display:flex;flex-direction:column;min-width:0}.work{flex:1;display:flex;min-height:0}
.split{width:4px;flex:none;background:#d6d6d6;margin-left:2px}.doc{flex:1;display:flex;flex-direction:column;min-width:0}
footer{height:12px;border-top:6px solid #ccc;overflow:hidden;line-height:20px;padding-left:4px}</style>
<div class="top"><title-bar>CAXA CAD <span style="font-size:13px">电子图板</span> 2020 - [C:&#92;Users&#92;liao_&#92;AppData&#92;Local&#92;Temp&#92;360zip$Temp&#92;360$3&#92;A0-装配图.dwg]</title-bar><menu-tabs></menu-tabs></div>
<cad-ribbon></cad-ribbon>
<div class="main"><side-dock></side-dock><div class="col"><div class="work"><property-panel></property-panel><div class="split"></div>
<div class="doc"><doc-tab>A0-装配图.dwg</doc-tab><drawing-view></drawing-view><sheet-tabs></sheet-tabs></div></div><footer>命令行</footer></div></div>`);
</script>
</body>
</html>
